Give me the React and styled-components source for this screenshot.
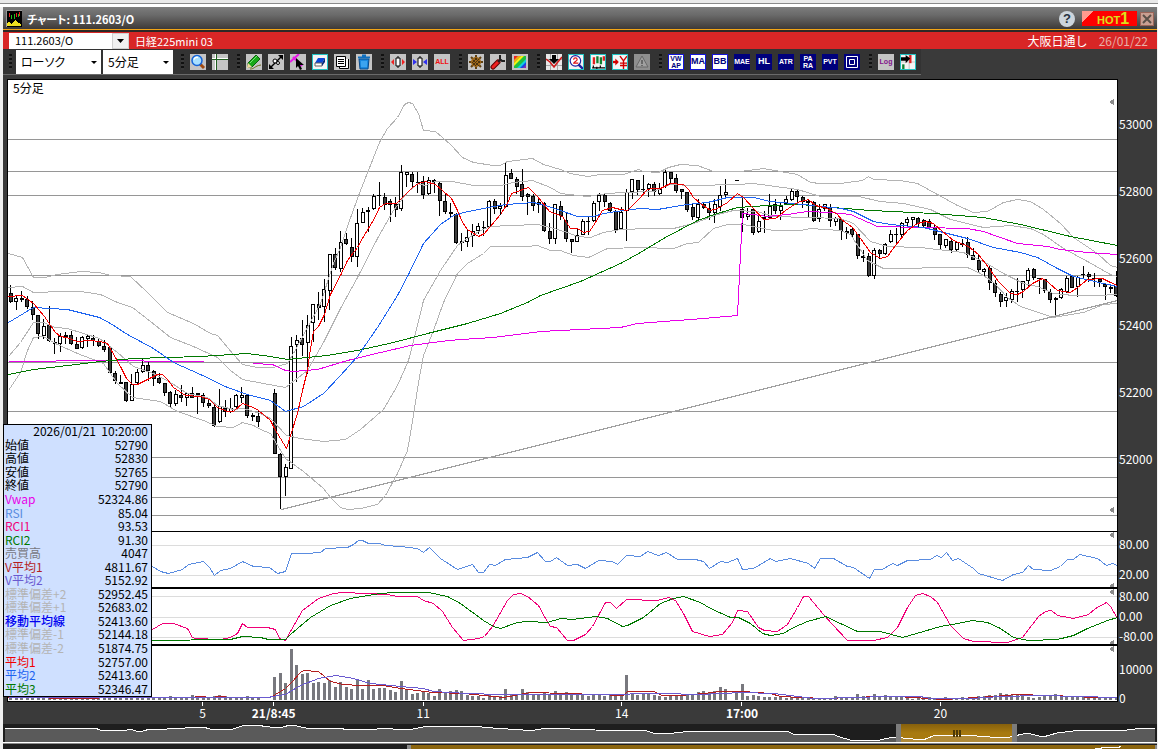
import React from 'react';
import styled, { createGlobalStyle, css } from 'styled-components';

const GlobalStyle = createGlobalStyle`
    * {
        box-sizing: border-box;
    }

    body {
        margin: 0;
        background: #f0f0f0;
        font-family: 'Noto Sans CJK JP', 'Liberation Sans', sans-serif;
        font-size: 12px;
        overflow: hidden;
    }

    button,
    input,
    select {
        font-family: inherit;
        border: 0;
        border-radius: 0;
        padding: 0;
        margin: 0;
    }
`;

const Frame = styled.div`
    border-top: 3px solid #e9e9e9;
    padding: 0 1px 0 3px;
`;

const Bevel = styled.div`
    height: 4px;
    background: linear-gradient(#8a8a8a 25%, #ffffff 25%);
    margin: 0 -1px 0 -3px;
`;

const Window = styled.main`
    position: relative;
    background: #3a3a3a;
`;

const TitleBar = styled.header`
    display: flex;
    align-items: center;
    gap: 5px;
    height: 25px;
    padding: 0 3px;
    background: linear-gradient(#7c7c7c, #6a6a6a 35%, #3a3634);
    border-bottom: 2px solid #2c2826;
    box-shadow: inset 0 -1px 0 #f2a516;
`;

const Title = styled.h1`
    flex: 1;
    margin: 0;
    font-size: 11px;
    line-height: 16px;
    font-weight: 700;
    font-feature-settings: 'palt';
    color: #ffffff;
`;

const HelpButton = styled.button`
    width: 16px;
    height: 16px;
    border-radius: 50%;
    background: #cdd5dc;
    color: #26323f;
    font-family: 'Liberation Sans', sans-serif;
    font-size: 13px;
    line-height: 16px;
    font-weight: 700;
`;

const HotButton = styled.button`
    width: 55px;
    height: 15px;
    margin-left: 2px;
    padding-left: 15px;
    background: linear-gradient(135deg, #ff9a8f 8px, #ff0000 8px);
    color: #d9e01c;
    font-family: 'Liberation Sans', sans-serif;
    font-size: 11px;
    line-height: 15px;
    font-weight: 700;
    text-align: left;
    white-space: nowrap;

    b {
        font-size: 16px;
    }
`;

const CloseButton = styled.button`
    display: flex;
    align-items: center;
    justify-content: center;
    width: 14px;
    height: 14px;
    margin-left: -2px;
    border: 1px solid #9b6558;
    background: #c9a092;
`;

const SymbolBar = styled.div`
    display: flex;
    align-items: center;
    height: 17px;
    padding: 0 9px 0 6px;
    background: #d82626;
    color: #ffffff;
    line-height: 14px;
`;

const SymbolInput = styled.input`
    width: 103px;
    height: 16px;
    padding: 0 6px 2px;
    background: #ffffff;
    color: #000000;
    font-size: 11px;
`;

const DropButton = styled.button`
    display: flex;
    align-items: center;
    justify-content: center;
    width: 17px;
    height: 16px;
    background: #f0f0f0;
    border: 1px solid #d0d0d0;
`;

const SymbolName = styled.span`
    flex: 1;
    padding-left: 6px;
    font-size: 11px;
`;

const SessionDate = styled.time`
    padding-left: 11px;
    color: #e8b0a8;
`;

const ToolBar = styled.div`
    display: flex;
    align-items: center;
    gap: 6px;
    width: 918px;
    max-width: 100%;
    height: 26px;
    padding-left: 3px;
    background: #333333;
    border-bottom: 1px solid #6a6a6a;
`;

const Grip = styled.span`
    width: 3px;
    height: 16px;
    margin-left: 3px;
    background: repeating-linear-gradient(#111111 0 2px, #3a3a3a 2px 4px);
`;

const SelectPair = styled.div`
    display: flex;
    gap: 2px;
    margin-left: -2px;
    margin-right: -1px;
`;

const ToolSelect = styled.select`
    width: ${(props) => props.$width};
    height: 24px;
    padding: 0 5px;
    appearance: none;
    background: #ffffff;
    color: #000000;
    font-size: 12px;
    font-feature-settings: 'palt';
`;

const SelectBox = styled.label`
    position: relative;
    display: flex;

    &::after {
        content: '';
        position: absolute;
        right: 4px;
        top: 11px;
        border: 3px solid transparent;
        border-top-color: #000000;
        border-bottom: 0;
    }
`;

const toolTones = {
    plain: css`
        background: #c4c4c4;
    `,
    active: css`
        background: #f4f4f4;
        border: 1px solid #22c3c3;
    `,
    navy: css`
        background: #00007c;
        color: #ffffff;
    `,
    blue: css`
        background: #ffffff;
        border: 1px solid #1414d8;
        color: #00007c;
    `,
    off: css`
        background: #8f8f8f;
    `,
};

const Tool = styled.button`
    display: flex;
    flex: none;
    align-items: center;
    justify-content: center;
    width: 16px;
    height: 16px;
    overflow: hidden;
    font-family: 'Liberation Sans', sans-serif;
    font-size: ${(props) => (props.$small ? '7px' : '9px')};
    line-height: 7px;
    font-weight: 700;
    color: ${(props) => props.$color};
    ${(props) => toolTones[props.$tone || 'plain']}

    svg {
        display: block;
        flex: none;
    }
`;

const ChartArea = styled.section`
    padding: 4px 0 0 4px;
`;

const Pane = styled.div`
    display: grid;
    grid-template-columns: 1fr 39px;
    grid-template-rows: 100%;
    height: ${(props) => props.$height};
`;

const Plot = styled.div`
    position: relative;
    background: #ffffff;
    border: solid #000000;
    border-width: ${(props) => props.$border};

    > svg {
        display: block;
        width: 100%;
        height: 100%;
    }
`;

const PlotLabel = styled.span`
    position: absolute;
    left: 5px;
    top: 0;
    line-height: 16px;
    color: #000000;
`;

const Axis = styled.div`
    display: flex;
    flex-direction: column;
    gap: ${(props) => props.$gap};
    padding: ${(props) => props.$top} 0 0 1px;
    color: #ffffff;
    line-height: 14px;
    white-space: nowrap;
`;

const TimeAxis = styled.div`
    display: flex;
    height: 22px;
    margin-right: 39px;
`;

const TimeGap = styled.span`
    flex: ${(props) => props.$grow} 1 0;
`;

const TimeTick = styled.span`
    display: flex;
    flex-direction: column;
    align-items: center;
    width: 0;
    color: #ffffff;
    line-height: 14px;
    font-weight: ${(props) => (props.$strong ? 700 : 400)};
    white-space: nowrap;

    &::before {
        content: '';
        width: 1px;
        height: 4px;
        background: #ffffff;
    }
`;

const Overview = styled.div`
    height: ${(props) => props.$height};
    overflow: hidden;
    background: #1e1e1e;

    svg {
        display: block;
        width: 100%;
    }
`;

const Divider = styled.div`
    height: 2px;
    background: #8a8a8a;
    border-top: 1px solid #ffffff;
`;

const DataTable = styled.table`
    position: absolute;
    left: 0;
    top: 417px;
    width: 149px;
    height: 273px;
    border: 1px solid #000000;
    border-collapse: separate;
    border-spacing: 0;
    background: #cfe0ff;
    line-height: 11px;

    th,
    td {
        padding: 0 3px 2px 1px;
        white-space: nowrap;
    }

    th {
        font-weight: 400;
        text-align: left;
    }

    td {
        text-align: right;
    }
`;

const DataLabel = styled.span`
    color: ${(props) => props.$color};
    font-weight: ${(props) => (props.$strong ? 500 : 400)};
`;

// high, body top, body bottom, low, rising (1) or falling (0), in plot pixels; null is a session break
const candles = [
    [285, 293, 302, 303, 0], [296, 298, 302, 310, 1], [291, 298, 300, 302, 0], [296, 299, 307, 309, 0],
    [301, 307, 315, 320, 0], [315, 315, 334, 339, 0], [319, 326, 336, 339, 1], [306, 325, 341, 342, 0],
    [338, 342, 344, 354, 0], [333, 336, 344, 352, 1], [332, 335, 337, 344, 1], [331, 335, 344, 345, 0],
    [337, 344, 349, 349, 0], [336, 337, 348, 349, 1], [335, 336, 339, 347, 1], [335, 338, 341, 346, 0],
    [338, 341, 346, 347, 0], [340, 346, 350, 352, 0], [347, 347, 373, 373, 0], [371, 373, 381, 384, 0],
    [375, 382, 384, 384, 0], [382, 382, 401, 402, 0], [374, 384, 401, 401, 1], [369, 372, 383, 384, 1],
    [358, 365, 372, 373, 1], [361, 365, 371, 381, 0], [370, 371, 379, 386, 0], [373, 378, 383, 384, 0],
    [383, 383, 393, 396, 0], [391, 392, 404, 408, 0], [390, 394, 404, 406, 1], [385, 395, 398, 402, 0],
    [392, 393, 398, 406, 1], [387, 393, 398, 398, 0], [393, 393, 395, 414, 0], [393, 395, 403, 407, 0],
    [400, 403, 406, 408, 0], [402, 407, 426, 427, 0], [389, 406, 422, 423, 1], [400, 408, 412, 417, 0],
    [398, 408, 412, 413, 1], [394, 395, 407, 408, 1], [387, 395, 398, 403, 1], [394, 395, 416, 418, 0],
    [413, 415, 417, 421, 0], [410, 416, 422, 427, 0], null, null,
    [389, 393, 454, 454, 0], [453, 454, 477, 509, 0], [464, 467, 477, 496, 1], [337, 346, 469, 469, 1],
    [335, 340, 345, 382, 1], [320, 338, 345, 356, 0], [315, 325, 343, 374, 1], [304, 304, 323, 342, 1],
    [292, 304, 308, 320, 0], [279, 289, 307, 322, 1], [254, 254, 291, 310, 1], [248, 254, 268, 270, 0],
    [231, 242, 269, 272, 1], [233, 239, 244, 245, 0], [238, 247, 257, 262, 0], [209, 223, 257, 267, 1],
    [208, 212, 223, 223, 1], [207, 210, 212, 232, 1], [194, 196, 209, 210, 1], [182, 195, 196, 206, 0],
    [193, 197, 205, 210, 0], [199, 201, 205, 222, 0], [197, 204, 210, 217, 0], [165, 172, 209, 211, 1],
    [172, 172, 175, 187, 1], [172, 174, 182, 187, 0], [172, 182, 183, 193, 0], [176, 181, 195, 199, 0],
    [177, 180, 194, 195, 1], [179, 180, 182, 193, 0], [182, 183, 201, 216, 0], [193, 201, 212, 214, 0],
    [203, 212, 214, 217, 0], [213, 214, 243, 244, 0], [233, 241, 243, 251, 0], [229, 237, 242, 247, 1],
    [224, 231, 236, 247, 1], [223, 226, 231, 234, 1], [221, 227, 228, 236, 0], [200, 201, 227, 228, 1],
    [199, 201, 209, 214, 0], [203, 206, 209, 215, 1], [163, 175, 207, 208, 1], [169, 173, 179, 179, 0],
    [177, 179, 187, 194, 0], [169, 184, 197, 201, 0], [193, 194, 197, 215, 0], [194, 196, 206, 211, 0],
    [197, 202, 205, 213, 1], [202, 203, 231, 232, 0], [223, 231, 239, 244, 0], [204, 204, 239, 244, 1],
    [201, 206, 216, 220, 0], [212, 220, 239, 242, 0], [239, 239, 242, 253, 0], [228, 235, 242, 242, 1],
    [219, 221, 235, 235, 1], [217, 221, 222, 235, 0], [201, 203, 221, 222, 1], [193, 195, 202, 211, 1],
    [194, 195, 202, 207, 0], [202, 203, 211, 212, 0], [210, 211, 230, 233, 0], [207, 212, 229, 230, 1],
    [189, 192, 211, 241, 1], [179, 179, 192, 199, 1], [180, 180, 190, 195, 0], [175, 189, 190, 193, 0],
    [183, 184, 189, 197, 1], [182, 184, 192, 196, 0], [183, 189, 194, 195, 1], [169, 172, 187, 188, 1],
    [172, 172, 179, 183, 0], [174, 178, 191, 193, 0], [189, 189, 192, 199, 0], [192, 192, 210, 212, 0],
    [203, 207, 217, 220, 0], [199, 204, 218, 220, 1], [202, 204, 208, 209, 0], [202, 208, 213, 220, 0],
    [199, 204, 213, 223, 1], [186, 195, 207, 211, 1], [179, 192, 195, 197, 1], null,
    [180, 180, 181, 181, 0], [197, 209, 218, 232, 0], [208, 214, 217, 220, 1], [209, 209, 233, 235, 0],
    [214, 221, 232, 233, 1], [211, 217, 219, 233, 1], [194, 206, 218, 219, 1], [199, 204, 211, 214, 0],
    [203, 206, 211, 220, 1], [196, 199, 204, 205, 1], [189, 191, 200, 201, 1], [189, 191, 197, 202, 0],
    [196, 197, 202, 208, 0], [199, 201, 203, 217, 0], [201, 202, 221, 222, 0], [204, 209, 219, 222, 1],
    [204, 204, 209, 211, 1], [204, 207, 221, 227, 0], [217, 218, 222, 226, 1], [219, 219, 231, 240, 0],
    [227, 231, 233, 239, 0], [227, 229, 235, 237, 0], [234, 234, 256, 259, 0], [250, 256, 258, 262, 0],
    [253, 256, 276, 277, 0], [248, 250, 276, 279, 1], [249, 250, 254, 259, 0], [243, 244, 254, 255, 1],
    [230, 234, 242, 243, 1], [228, 234, 235, 243, 0], [222, 223, 235, 237, 1], [217, 219, 223, 226, 1],
    [217, 217, 220, 226, 1], [217, 218, 224, 227, 0], [219, 220, 226, 228, 0], [219, 221, 228, 228, 0],
    [224, 227, 235, 240, 0], [234, 234, 245, 249, 0], [239, 239, 246, 248, 1], [238, 241, 250, 253, 0],
    [241, 242, 250, 251, 1], [239, 243, 245, 247, 0], [237, 242, 255, 258, 0], [248, 255, 260, 260, 0],
    [255, 260, 270, 272, 0], [268, 269, 272, 276, 1], [265, 268, 283, 290, 0], [280, 283, 293, 297, 0],
    [292, 294, 302, 307, 0], [293, 297, 301, 307, 1], [289, 291, 300, 303, 1], [278, 291, 292, 302, 0],
    [281, 281, 290, 298, 1], [268, 270, 281, 286, 1], [268, 269, 278, 280, 0], [278, 278, 279, 294, 0],
    [279, 279, 291, 293, 0], [289, 292, 300, 303, 0], [297, 298, 300, 317, 0], [288, 289, 298, 299, 1],
    [276, 278, 292, 293, 1], [275, 276, 288, 288, 0], [276, 277, 287, 297, 1], [266, 274, 275, 278, 0],
    [272, 274, 277, 282, 0], [273, 278, 279, 287, 0], [278, 279, 282, 287, 0], [283, 284, 287, 300, 0],
    [284, 287, 289, 293, 1], [271, 286, 296, 297, 0],
];

const volumes = [
    3, 3, 3, 3, 3, 3, 3, 3, 3, 3, 3, 3, 3, 3, 3, 3, 3, 3, 3, 3, 3, 3, 3, 3, 3, 3, 3, 3, 3, 4, 3, 3, 3, 5, 4, 3, 3, 4,
    5, 4, 3, 3, 3, 4, 3, 3, 0, 0, 23, 27, 17, 51, 35, 26, 27, 17, 18, 17, 20, 13, 18, 13, 11, 20, 11, 20, 11, 12, 12,
    10, 8, 19, 10, 6, 7, 8, 7, 4, 11, 7, 9, 10, 9, 5, 4, 4, 2, 5, 4, 4, 11, 6, 5, 11, 8, 6, 6, 7, 6, 9, 5, 8, 5, 6, 6,
    4, 6, 6, 4, 5, 5, 5, 25, 6, 5, 6, 6, 5, 4, 3, 5, 4, 4, 6, 6, 8, 9, 7, 9, 13, 11, 0, 9, 16, 4, 5, 4, 3, 3, 3, 3, 2,
    3, 3, 3, 3, 2, 2, 2, 2, 4, 3, 3, 3, 6, 4, 3, 6, 4, 5, 4, 3, 3, 3, 1, 2, 3, 3, 2, 2, 3, 1, 2, 3, 1, 1, 4, 4, 5, 5,
    7, 6, 5, 5, 4, 3, 2, 3, 4, 4, 6, 5, 3, 3, 4, 4, 2, 2, 3, 3, 3, 3,
];

const priceGrid = [139, 171, 195, 275, 362, 411, 457, 477, 497, 515];

const priceLines = [
    {
        color: '#b4b4b4',
        points:
            '8,253 22,257 33,277 44,277 57,274 80,271 99,272 110,275 130,276 147,292 167,312 193,323 210,333 217,335 233,354 242,364 257,367 273,367 287,363 293,353 320,303 333,263 340,247 348,223 360,190 379,142 387,128 397,117 404,104 408,102 412,103 418,113 423,130 435,131 450,144 462,157 473,162 493,165 500,165 507,161 532,158 543,164 560,169 570,173 587,176 600,174 623,174 638,169 643,171 658,172 668,167 680,164 697,165 713,171 740,171 763,168 797,174 810,182 820,183 840,183 862,180 868,176 873,179 900,180 917,183 937,194 957,205 973,212 987,211 1003,202 1017,199 1030,201 1043,209 1060,223 1073,237 1097,253 1110,265 1117,267',
    },
    {
        color: '#b4b4b4',
        points:
            '8,287 22,286 33,292 43,292 53,291 80,291 100,294 117,302 132,307 150,321 170,337 193,346 217,357 230,370 242,379 263,383 285,387 307,370 323,342 340,308 357,277 377,238 393,210 407,192 417,183 425,185 435,181 452,181 473,185 500,185 513,182 532,180 550,187 560,193 587,196 607,193 623,192 653,191 670,184 693,185 737,184 753,183 797,189 820,196 858,196 880,201 903,203 930,209 950,219 983,227 1010,225 1030,228 1043,234 1063,248 1087,261 1110,274 1117,276',
    },
    {
        color: '#b4b4b4',
        points:
            '8,356 20,342 33,322 43,322 55,327 67,328 99,338 117,352 133,366 153,373 170,382 187,393 207,397 217,405 233,409 243,408 260,413 270,418 286,435 300,438 323,441 345,439 360,429 383,409 397,385 408,360 415,333 423,300 440,270 457,245 467,238 480,230 490,226 510,225 537,224 550,227 567,232 577,236 590,237 603,232 620,229 650,228 673,228 693,223 717,214 733,210 757,211 773,216 807,217 840,218 853,223 870,241 887,246 920,247 963,252 983,261 1003,273 1023,283 1037,286 1053,293 1073,295 1097,295 1117,294',
    },
    {
        color: '#b4b4b4',
        points:
            '8,390 20,372 27,350 33,337 43,336 57,344 77,353 103,363 117,383 132,397 160,401 177,411 203,420 217,426 233,427 242,422 253,425 260,429 270,433 285,458 303,471 323,488 330,497 340,507 347,509 360,508 377,504 385,495 397,473 407,450 413,415 418,382 423,355 433,330 443,302 457,273 467,263 483,253 490,246 527,246 537,245 550,250 560,250 573,255 588,257 607,248 640,247 673,248 687,243 698,242 713,228 727,224 743,224 773,230 800,230 810,228 840,230 850,234 867,260 883,268 913,268 930,267 967,267 980,273 993,282 1007,297 1020,306 1053,317 1083,312 1103,304 1117,303',
    },
    { color: '#a0a0a0', points: '281,509 1117,300' },
    {
        color: '#e800e8',
        points: '8,361 55,361 56,360 143,360 144,361 203,361',
    },
    {
        color: '#e800e8',
        points:
            '253,363 272,364 285,370 292,371 317,369 347,360 380,352 410,345 440,341 460,339 493,337 540,331 620,327 637,323 703,318 737,315 742,213 753,214 767,216 787,214 807,211 830,212 850,214 877,226 967,228 983,231 1017,243 1047,246 1060,249 1087,252 1117,254',
    },
    {
        color: '#007800',
        points:
            '8,374 33,369 67,365 100,361 133,358 200,356 247,353 270,356 287,359 327,355 357,350 393,342 427,333 467,323 500,313 527,302 540,295 580,281 620,263 640,252 663,238 697,220 717,213 737,207 767,205 800,204 820,206 870,210 892,211 933,213 983,217 1020,224 1070,236 1117,245',
    },
    {
        color: '#1e64f0',
        points:
            '8,322 23,313 33,307 67,309 99,317 110,323 127,334 153,348 173,362 200,374 227,387 247,394 270,400 285,411 303,406 323,393 340,375 357,356 377,327 397,295 408,274 423,243 440,224 453,215 463,212 493,206 506,204 533,202 545,205 560,210 577,216 593,216 603,213 623,210 640,208 657,209 687,204 707,202 727,197 753,197 770,201 803,204 841,208 853,211 873,221 890,224 923,227 943,232 967,238 993,247 1020,252 1037,257 1057,268 1073,276 1103,283 1117,286',
    },
    {
        color: '#f00000',
        points:
            '8,296 22,295 33,303 44,316 50,325 55,332 60,336 66,337 77,341 88,340 100,341 107,343 115,357 121,368 126,378 132,384 137,384 143,381 149,378 157,374 162,374 167,379 173,387 185,395 200,396 209,399 217,407 227,411 233,411 242,403 253,407 258,410 270,420 274,428 286,448 297,413 302,390 307,370 310,348 313,331 318,326 324,314 330,294 341,273 347,260 357,247 363,236 368,228 374,218 379,207 385,203 396,203 401,198 412,187 418,183 425,181 435,184 442,190 451,198 457,210 462,222 467,229 478,236 484,233 489,227 500,214 507,203 511,193 517,191 528,187 537,196 549,211 562,216 570,228 577,228 583,232 589,231 595,222 602,210 612,207 620,209 627,210 638,199 647,189 652,188 660,188 670,183 683,184 688,189 693,197 700,203 710,210 717,208 727,202 737,193 743,197 753,208 763,219 775,218 785,210 797,202 808,199 815,205 827,208 837,214 841,219 852,227 860,238 870,252 880,258 887,256 895,245 907,230 917,223 925,221 933,223 942,231 953,240 968,246 978,254 988,267 998,281 1010,293 1017,294 1023,291 1032,283 1042,278 1048,282 1057,290 1070,292 1077,287 1087,279 1102,278 1110,282 1117,285',
    },
];

const rsiLines = [
    {
        color: '#5a8ce0',
        points:
            '152,566 160,571 168,573 182,569 188,564 203,561 209,567 214,575 220,570 230,568 242,561 253,566 269,567 277,573 285,571 291,553 305,553 320,552 325,548 347,547 353,544 358,540 362,540 368,543 379,543 385,545 400,546 417,548 423,552 429,547 440,558 457,569 472,564 478,572 483,572 489,564 495,565 505,559 527,557 537,552 545,561 550,561 556,557 567,565 577,564 585,568 598,560 612,561 617,564 626,555 640,556 647,551 658,555 666,552 677,559 695,559 703,561 709,568 720,561 727,562 737,558 742,569 753,568 770,558 775,561 790,558 808,563 814,568 820,558 833,558 847,566 853,567 869,578 874,569 882,569 892,563 897,565 907,560 930,559 936,555 941,557 946,552 952,560 958,558 973,568 978,573 1002,580 1013,574 1022,572 1028,565 1033,569 1050,570 1060,566 1067,559 1073,559 1079,554 1097,558 1106,565 1112,563 1117,565',
    },
];

const rciLines = [
    {
        color: '#f00078',
        points:
            '152,629 162,623 173,623 187,628 192,637 195,638 220,639 230,637 237,633 242,623 247,627 267,627 275,629 279,638 285,640 290,631 302,610 318,598 333,593 343,592 387,594 397,596 417,596 423,600 433,603 442,611 452,627 463,640 478,638 484,636 492,626 507,600 513,594 520,593 527,596 538,605 545,618 550,626 556,627 567,640 573,640 585,634 592,626 605,602 610,602 616,608 626,599 657,600 668,597 675,600 683,613 692,631 709,636 722,634 732,622 737,610 747,611 758,627 764,630 777,631 787,624 797,607 803,596 808,596 823,614 832,624 847,640 873,640 887,637 897,627 907,607 915,595 922,593 930,596 937,602 950,625 963,638 973,641 1007,642 1022,637 1038,616 1045,611 1051,610 1057,615 1073,618 1088,614 1095,608 1106,602 1110,606 1117,618',
    },
    {
        color: '#007800',
        points:
            '152,640 230,639 242,636 260,637 268,639 285,639 290,634 310,617 330,605 350,598 380,593 393,592 428,592 447,596 460,603 483,620 493,626 500,628 517,622 527,621 547,622 560,618 572,619 595,616 607,618 622,626 627,625 643,617 660,603 673,598 683,596 700,602 710,608 730,617 738,617 750,623 762,633 770,635 783,633 793,627 807,621 825,616 857,631 880,631 902,637 923,631 940,626 957,623 972,620 987,622 1000,628 1013,637 1028,640 1057,639 1073,635 1087,628 1107,620 1117,617',
    },
];

const volumeLines = [
    {
        color: '#b41e1e',
        points:
            '8,697 88,698 110,697 190,697 200,696 210,697 220,696 230,697 270,697 285,688 292,681 300,672 303,670 318,671 330,681 343,684 360,685 383,685 400,688 433,692 463,693 483,695 503,697 530,692 567,693 623,695 627,691 653,691 662,695 680,695 703,693 720,691 742,691 770,693 780,696 823,698 880,696 897,696 943,699 993,696 1017,694 1077,696 1090,697 1117,697',
    },
    {
        color: '#6a5ad0',
        points:
            '8,697 267,697 285,694 300,685 318,678 335,675 353,678 370,683 400,686 423,688 433,691 467,693 500,694 600,694 660,693 700,694 742,692 773,693 790,695 813,698 860,697 880,696 920,696 930,698 970,698 1000,696 1040,695 1117,697',
    },
];

const overviewPoints =
    '5,728 95,728 100,730 118,730 123,731 131,729 138,732 143,731 150,729 167,729 203,727 210,729 233,729 242,726 255,725 270,727 283,727 290,725 297,726 310,729 325,728 340,728 347,730 377,729 385,728 400,730 413,729 423,727 440,726 470,726 493,728 523,730 535,730 547,728 570,729 590,729 595,730 647,731 653,733 665,734 683,732 700,731 740,731 787,731 793,734 832,734 840,737 850,740 880,740 893,737 923,740 933,736 944,735 950,736 963,735 990,737 1010,737 1027,733 1043,737 1057,733 1073,731 1083,730 1127,730 1143,728 1155,728';

const timeTicks = [
    { label: '5', gap: 195 },
    { label: '21/8:45', gap: 71, strong: true },
    { label: '11', gap: 149 },
    { label: '14', gap: 198 },
    { label: '17:00', gap: 120, strong: true },
    { label: '20', gap: 198 },
];

const dataRows = [
    ['始値', '52790', '#000000'],
    ['高値', '52830', '#000000'],
    ['安値', '52765', '#000000'],
    ['終値', '52790', '#000000'],
    ['Vwap', '52324.86', '#e800e8'],
    ['RSI', '85.04', '#5a8ce0'],
    ['RCI1', '93.53', '#f00078'],
    ['RCI2', '91.30', '#007800'],
    ['売買高', '4047', '#78787e'],
    ['V平均1', '4811.67', '#b41e1e'],
    ['V平均2', '5152.92', '#6a5ad0'],
    ['標準偏差+2', '52952.45', '#b4b4b4'],
    ['標準偏差+1', '52683.02', '#b4b4b4'],
    ['移動平均線', '52413.60', '#0000f0'],
    ['標準偏差-1', '52144.18', '#b4b4b4'],
    ['標準偏差-2', '51874.75', '#b4b4b4'],
    ['平均1', '52757.00', '#f00000'],
    ['平均2', '52413.60', '#1e64f0'],
    ['平均3', '52346.47', '#007800'],
];

const slotCentre = (index) => 10.5 + 5.5 * index;

const Lines = ({ lines }) =>
    lines.map((line) => (
        <polyline key={line.points} points={line.points} fill="none" stroke={line.color} transform="translate(.5 .5)" />
    ));

const Grid = ({ rows, color }) =>
    rows.map((y) => <rect key={y} x="8" y={y} width="1109" height="1" fill={color} />);

const Arrows = ({ rows }) => rows.map((y) => <path key={y} d={`M1109 ${y}l5-3v6z`} fill="#8c8c8c" />);

const PlotSvg = ({ top, height, children }) => (
    <svg viewBox={`8 ${top} 1109 ${height}`} preserveAspectRatio="none" shapeRendering="crispEdges">
        {children}
    </svg>
);

const Candles = () =>
    candles.map((candle, index) => {
        if (!candle) return null;
        const [high, top, bottom, low, rising] = candle;
        const wickX = Math.floor(slotCentre(index));
        const bodyX = Math.round(slotCentre(index) - 2);
        return (
            <g key={wickX}>
                <rect x={wickX} y={high} width="1" height={low - high} />
                <rect x={bodyX} y={top} width="4" height={bottom - top} />
                {bottom - top > 2 && (
                    <rect
                        x={bodyX + 1}
                        y={top + 1}
                        width="2"
                        height={bottom - top - 2}
                        fill={rising ? '#ffffff' : '#3c3c3c'}
                    />
                )}
            </g>
        );
    });

const Icon = ({ children, size = 16 }) => (
    <svg width={size} height={size} viewBox={size === 16 ? '0 0 16 16' : '2 2 12 12'} fill="none">
        {children}
    </svg>
);

const Down = () => (
    <svg width="7" height="4" viewBox="0 0 7 4">
        <path d="M0 0h7L3.500 4z" />
    </svg>
);

const AppIcon = () => (
    <svg width="16" height="17" viewBox="0 0 16 17" fill="none" shapeRendering="crispEdges">
        <path d="M0 0h16v17H0z" fill="#000" stroke="#999" />
        <path d="M3.500 3v4M10.500 3v4M13.500 2v4" stroke="#e82020" />
        <path d="M5.500 5v4M8.500 4v5M12.500 4v3" stroke="#20c020" />
        <path d="M1 16v-3l2-1 2 2 3-3 2-1 2 3 3 1v2z" fill="#f0e020" />
    </svg>
);

const CandleMark = ({ color, inward }) => (
    <Icon>
        <path d="M8 2v12" stroke="#000" />
        <path d="M6 4h4v8H6z" fill="#fff" stroke="#000" />
        <path d={inward ? 'M1 5l4 3-4 3zM15 5l-4 3 4 3z' : 'M4 5L1 8l3 3zM12 5l3 3-3 3z'} fill={color} />
    </Icon>
);

const App = () => (
    <>
        <GlobalStyle />
        <Frame>
            <Bevel />
            <Window>
                <TitleBar>
                    <AppIcon />
                    <Title>チャート: 111.2603/O</Title>
                    <HelpButton type="button">?</HelpButton>
                    <HotButton type="button">
                        HOT<b>1</b>
                    </HotButton>
                    <CloseButton type="button" aria-label="閉じる">
                        <svg width="10" height="10" viewBox="0 0 10 10">
                            <path d="M1 1l8 8M9 1L1 9" stroke="#5a5048" strokeWidth="2" />
                        </svg>
                    </CloseButton>
                </TitleBar>
                <SymbolBar>
                    <SymbolInput aria-label="銘柄コード" defaultValue="111.2603/O" />
                    <DropButton type="button" aria-label="銘柄一覧">
                        <Down />
                    </DropButton>
                    <SymbolName>日経225mini 03</SymbolName>
                    <span>大阪日通し</span>
                    <SessionDate>26/01/22</SessionDate>
                </SymbolBar>
                <ToolBar>
                    <Grip />
                    <SelectPair>
                        <SelectBox>
                            <ToolSelect aria-label="チャート種類" $width="85px">
                                <option>ローソク</option>
                            </ToolSelect>
                        </SelectBox>
                        <SelectBox>
                            <ToolSelect aria-label="足種" $width="70px">
                                <option>5分足</option>
                            </ToolSelect>
                        </SelectBox>
                    </SelectPair>
                    <Grip />
                    <Tool type="button" aria-label="拡大">
                        <Icon>
                            <path d="M10 10l4 4" stroke="#a04a10" strokeWidth="3" />
                            <circle cx="7" cy="6.500" r="5" fill="#a8e0ff" stroke="#1464d8" strokeWidth="1.500" />
                            <path d="M4 5.500a3 3 0 0 1 4-2" stroke="#fff" strokeWidth="1.500" />
                        </Icon>
                    </Tool>
                    <Tool type="button" aria-label="十字線">
                        <Icon>
                            <path d="M3.500 0v16M0 4.500h16" stroke="#fff" />
                            <path d="M4.500 0v16M0 5.500h16" stroke="#206020" />
                        </Icon>
                    </Tool>
                    <Grip />
                    <Tool type="button" aria-label="描画">
                        <Icon>
                            <path d="M2 9l8-8 4 4-8 8H2z" fill="#18a818" stroke="#0c600c" />
                            <path d="M4 9l7-7" stroke="#70e870" />
                            <path d="M2 9l4 4-5 1z" fill="#f0d8a0" />
                            <path d="M4 15c5 0 4-3 11-4" stroke="#707020" />
                        </Icon>
                    </Tool>
                    <Tool type="button" aria-label="ライン">
                        <Icon>
                            <path d="M2 14L14 2" stroke="#000" strokeWidth="1.500" />
                            <path d="M1 15v-5l5 5zM15 1v5l-5-5z" fill="#000" />
                            <circle cx="7" cy="7" r="2" fill="#fff" stroke="#000" />
                            <circle cx="10" cy="9" r="1.500" fill="#fff" stroke="#000" />
                        </Icon>
                    </Tool>
                    <Tool type="button" aria-label="選択">
                        <Icon>
                            <path d="M0 8L9 0M3 3l9 9" stroke="#e818e8" strokeWidth="2" />
                            <path d="M6 4v10l2-2 2 4 2-1-2-4h4z" fill="#000" />
                        </Icon>
                    </Tool>
                    <Tool type="button" aria-label="消しゴム" $tone="active">
                        <Icon size={12}>
                            <path d="M6 4h7l-3 5H3z" fill="#0848d8" />
                            <path d="M3 9h7v3H3z" fill="#fff" stroke="#606060" />
                            <path d="M10 9l3-5v4l-3 4z" fill="#082878" />
                        </Icon>
                    </Tool>
                    <Tool type="button" aria-label="コピー">
                        <Icon>
                            <path d="M5.500 5v9.500h9V5" fill="#fff" stroke="#000" />
                            <path d="M2.500 2.500h9v10h-9z" fill="#fff" stroke="#000" />
                            <path d="M4 5.500h6M4 7.500h6M4 9.500h6" stroke="#000" />
                        </Icon>
                    </Tool>
                    <Tool type="button" aria-label="削除">
                        <Icon>
                            <path d="M3 5h10l-1 10H4z" fill="#1888e0" stroke="#084888" />
                            <path d="M2 3.500h12M6 1.500h4" stroke="#1070c0" strokeWidth="2" />
                            <path d="M6 7v6M8 7v6M10 7v6" stroke="#60c0ff" />
                        </Icon>
                    </Tool>
                    <Grip />
                    <Tool type="button" aria-label="足を広げる">
                        <CandleMark color="#f02020" />
                    </Tool>
                    <Tool type="button" aria-label="足を狭める">
                        <CandleMark color="#3030f0" inward />
                    </Tool>
                    <Tool type="button" $small $color="#f01010">
                        ALL
                    </Tool>
                    <Grip />
                    <Tool type="button" aria-label="設定">
                        <Icon>
                            <path d="M8 1v14M1 8h14M3 3l10 10M13 3L3 13" stroke="#604010" strokeWidth="2" />
                            <circle cx="8" cy="8" r="5" fill="#a06818" />
                            <path d="M5 6l6 6M4 8l4 4M7 4l5 5M11 5l-6 6M9 4L4 9M12 7l-5 5" stroke="#4c3410" />
                        </Icon>
                    </Tool>
                    <Tool type="button" aria-label="ツール">
                        <Icon>
                            <path d="M3 13l5-5" stroke="#600000" strokeWidth="5" strokeLinecap="round" />
                            <path d="M3 13l5-5" stroke="#f02020" strokeWidth="3" strokeLinecap="round" />
                            <path d="M8 8l3-3M10 1v4l2 2h3" stroke="#202020" strokeWidth="2" />
                        </Icon>
                    </Tool>
                    <Tool type="button" aria-label="配色">
                        <Icon>
                            <path d="M2 2h12v12H2z" fill="#20c040" />
                            <path d="M2 2h4L2 6z" fill="#f02020" />
                            <path d="M6 2h3L2 9V6z" fill="#ff9a10" />
                            <path d="M9 2h3L2 12V9z" fill="#f8f010" />
                            <path d="M14 5v4l-5 5H5z" fill="#10d0e0" />
                            <path d="M14 8v3l-3 3H8z" fill="#2040e8" />
                            <path d="M14 11v3h-3z" fill="#9020c0" />
                        </Icon>
                    </Tool>
                    <Grip />
                    <Tool type="button" aria-label="安値追加">
                        <Icon>
                            <path d="M0 0h16v16H0z" fill="#e8e8e8" />
                            <path d="M4.500 0v16M11.500 0v16M0 5.500h16M0 11.500h16" stroke="#a8a8a8" />
                            <path d="M0 5l4 3 4 5 3-4 5-6" stroke="#d01818" strokeWidth="1.500" />
                            <path d="M6 1h4v4h3L8 10 3 5h3z" fill="#000" />
                        </Icon>
                    </Tool>
                    <Tool type="button" aria-label="銘柄比較" $tone="active">
                        <Icon size={14}>
                            <circle cx="7.500" cy="7" r="4.500" fill="#fff" stroke="#2020a0" />
                            <path d="M6 6c0-2 3-2 3 0 0 1-3 2-3 3h4" stroke="#e01010" />
                            <path d="M10 10l4 4" stroke="#2020a0" strokeWidth="2" />
                        </Icon>
                    </Tool>
                    <Tool type="button" aria-label="出来高" $tone="active">
                        <Icon size={14}>
                            <path d="M4.500 4v6M13 3v4" stroke="#e02020" strokeWidth="2" />
                            <path d="M7.500 3v6M10.500 4v6" stroke="#108030" strokeWidth="2" />
                            <path d="M3 13h11M4 11v2M7 12v2M10 11v2" stroke="#000" />
                        </Icon>
                    </Tool>
                    <Tool type="button" aria-label="円換算" $tone="active">
                        <Icon size={14}>
                            <path d="M2 8h4" stroke="#d00000" strokeWidth="2" />
                            <path d="M4 5l3 3-3 3z" fill="#d00000" />
                            <path d="M8 3l3 4 3-4M11 7v7M8 9h6M8 11h6" stroke="#d00000" strokeWidth="1.200" />
                        </Icon>
                    </Tool>
                    <Tool type="button" aria-label="アラート" $tone="off">
                        <Icon>
                            <path d="M8 2l6 11H2z" fill="#a0a0a0" stroke="#686868" />
                            <path d="M8 6v4M8 11v1" stroke="#555" strokeWidth="1.500" />
                        </Icon>
                    </Tool>
                    <Grip />
                    <Tool type="button" $tone="blue" $small>
                        VW
                        <br />
                        AP
                    </Tool>
                    <Tool type="button" $tone="blue">
                        MA
                    </Tool>
                    <Tool type="button" $tone="blue">
                        BB
                    </Tool>
                    <Tool type="button" $tone="navy" $small>
                        MAE
                    </Tool>
                    <Tool type="button" $tone="navy">
                        HL
                    </Tool>
                    <Tool type="button" $tone="navy" $small>
                        ATR
                    </Tool>
                    <Tool type="button" $tone="navy" $small>
                        PA
                        <br />
                        RA
                    </Tool>
                    <Tool type="button" $tone="navy" $small>
                        PVT
                    </Tool>
                    <Tool type="button" aria-label="回帰" $tone="navy">
                        <Icon>
                            <path d="M2.500 2.500h11v11h-11zM5.500 5.500h5v5h-5z" stroke="#fff" />
                        </Icon>
                    </Tool>
                    <Grip />
                    <Tool type="button" $small $color="#80108a">
                        Log
                    </Tool>
                    <Tool type="button" aria-label="右余白" $tone="active">
                        <Icon size={14}>
                            <path d="M9 2v12M2 8h12" stroke="#c8c8c8" />
                            <path d="M10 2v7" stroke="#e02020" strokeWidth="2" />
                            <path d="M2 4h4V2l4 3-4 4V7H2z" fill="#000" />
                            <path d="M4 10v4" stroke="#108030" strokeWidth="2" />
                        </Icon>
                    </Tool>
                </ToolBar>
                <ChartArea>
                    <Pane $height="453px">
                        <Plot $border="1px">
                            <PlotSvg top={80} height={451}>
                                <Grid rows={priceGrid} color="#969696" />
                                <Candles />
                                <Lines lines={priceLines} />
                                <Arrows rows={[102, 510]} />
                            </PlotSvg>
                            <PlotLabel>5分足</PlotLabel>
                        </Plot>
                        <Axis $gap="53px" $top="38px">
                            <span>53000</span>
                            <span>52800</span>
                            <span>52600</span>
                            <span>52400</span>
                            <span>52200</span>
                            <span>52000</span>
                        </Axis>
                    </Pane>
                    <Pane $height="57px">
                        <Plot $border="0 1px 2px 1px">
                            <PlotSvg top={532} height={55}>
                                <Grid rows={[545, 575]} color="#dcdcdc" />
                                <Lines lines={rsiLines} />
                                <Arrows rows={[535, 586]} />
                            </PlotSvg>
                        </Plot>
                        <Axis $gap="16px" $top="5px">
                            <span>80.00</span>
                            <span>20.00</span>
                        </Axis>
                    </Pane>
                    <Pane $height="57px">
                        <Plot $border="0 1px 2px 1px">
                            <PlotSvg top={589} height={55}>
                                <Grid rows={[596, 617, 637]} color="#dcdcdc" />
                                <Lines lines={rciLines} />
                                <Arrows rows={[592, 643]} />
                            </PlotSvg>
                        </Plot>
                        <Axis $gap="6px" $top="0">
                            <span>80.00</span>
                            <span>0.00</span>
                            <span>-80.00</span>
                        </Axis>
                    </Pane>
                    <Pane $height="56px">
                        <Plot $border="0 1px 1px 1px">
                            <PlotSvg top={646} height={55}>
                                {volumes.map((height, index) => (
                                    <rect
                                        key={slotCentre(index)}
                                        x={Math.floor(slotCentre(index)) - 1}
                                        y={700 - height}
                                        width="3"
                                        height={height}
                                        fill="#78787e"
                                    />
                                ))}
                                <Lines lines={volumeLines} />
                                <Arrows rows={[649]} />
                            </PlotSvg>
                        </Plot>
                        <Axis $gap="15px" $top="16px">
                            <span>10000</span>
                            <span>0</span>
                        </Axis>
                    </Pane>
                    <TimeAxis>
                        {timeTicks.map((tick) => (
                            <React.Fragment key={tick.label}>
                                <TimeGap $grow={tick.gap} />
                                <TimeTick $strong={tick.strong}>{tick.label}</TimeTick>
                            </React.Fragment>
                        ))}
                        <TimeGap $grow={177} />
                    </TimeAxis>
                </ChartArea>
                <Overview $height="18px">
                    <svg height="18" viewBox="3 724 1154 18" preserveAspectRatio="none" shapeRendering="crispEdges">
                        <defs>
                            <linearGradient id="range" x2="0" y2="1">
                                <stop stopColor="#86600c" />
                                <stop offset=".5" stopColor="#a87a10" />
                                <stop offset="1" stopColor="#a87a10" />
                            </linearGradient>
                        </defs>
                        <polygon points={`5,742 ${overviewPoints} 1155,742`} fill="#5a5a5a" />
                        <rect x="897" y="724" width="119" height="18" fill="url(#range)" />
                        <path d="M901 742v-4l22 2 10-4 30-1 27 2h22v5z" fill="#b08a38" />
                        <polyline points={overviewPoints} fill="none" stroke="#ffffff" />
                        <path d="M896 724h5v18h-5zM1012 724h5v18h-5z" fill="#7c7c7c" />
                        <path d="M953 730h2v7h-2zM956 730h2v7h-2zM959 730h2v7h-2z" fill="#4a3808" />
                    </svg>
                </Overview>
                <Divider />
                <Overview $height="5px">
                    <svg height="5" viewBox="3 744 1154 5" preserveAspectRatio="none" shapeRendering="crispEdges">
                        <path d="M411 745h744v4H411z" fill="#8a640e" />
                        <path d="M407 745h4v4h-4zM1155 745h2v4h-2z" fill="#8c8c8c" />
                        <path d="M1095 748h6v-1h18v-1h2" fill="none" stroke="#ffffff" />
                    </svg>
                </Overview>
                <DataTable>
                    <tbody>
                        <tr>
                            <td colSpan="2">2026/01/21 &nbsp;10:20:00</td>
                        </tr>
                        {dataRows.map(([label, value, color]) => (
                            <tr key={label}>
                                <th scope="row">
                                    <DataLabel $color={color} $strong={label === '移動平均線'}>
                                        {label}
                                    </DataLabel>
                                </th>
                                <td>{value}</td>
                            </tr>
                        ))}
                    </tbody>
                </DataTable>
            </Window>
        </Frame>
    </>
);

export default App;
